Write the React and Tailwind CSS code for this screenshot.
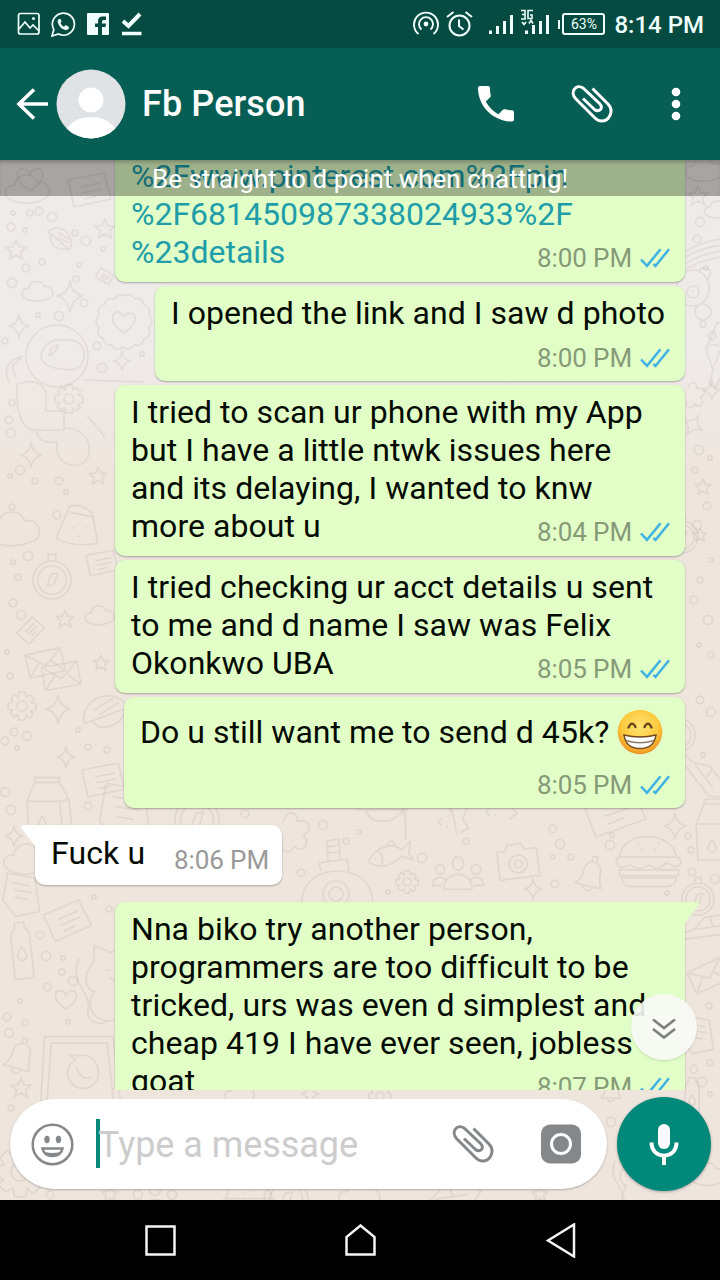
import React from "react";

const STAR = "M0-10 3-3 10-3 4.500 2 6.500 9 0 5-6.500 9-4.500 2-10-3-3-3Z";
const SPARK = "M0-13Q1-2 11 0Q2 2 0 13Q-2 2-11 0Q-1-2 0-13Z";
const HEART = "M0 9C-16-1-11-11-4-9Q-1-8 0-4Q1-8 4-9C11-11 16-1 0 9Z";
const CLOUD = "M-11 7C-18 3-15-4-9-3C-8-12 4-12 6-5C14-7 17 3 11 6Q0 11-11 7Z";
const GEAR = "M-3-14H3L4-9 8-11 12-7 9-4 14-2V4L9 5 11 9 7 12 4 9 3 14H-3L-4 9-8 11-12 7-9 4-14 3V-3L-9-4-11-8-7-12-4-9Z M5 0A5 5 0 1 1-5 0A5 5 0 1 1 5 0";
const BELL = "M-10 9Q-5 4-5-4C-5-14 9-14 9-4Q9 4 12 9ZM-3 10Q1 16 5 10M0-12V-16H4V-12";
const CARD = "M-20-10 16-17 23 9-14 17ZM-7-3 13-7M-6 3 14-1M-4 9 8 6";
const MAIL = "M-20-12H20V14H-20ZM-20-12 0 4 20-12M-20 14-6-1M20 14 6-1";
const BURGER = "M-30-8C-28-36 24-36 28-8ZM-32-8H30Q36-2 28 2L18-2 9 4 0 0-10 4-20 0-29 3Q-36-3-32-8M-30 5H30V11H-30ZM-28 13H28Q27 22 18 22H-18Q-27 22-28 13M-12-22h2M-2-25h2M9-22h2M-8-15h2M5-16h2";
const CAMERA = "M-20-12H-12L-9-18H5L8-12H20V16H-20ZM9 2A9 9 0 1 1-9 2A9 9 0 1 1 9 2M4 2A4 4 0 1 1-4 2A4 4 0 1 1 4 2";
const PEOPLE = "M6-12A6 7 0 1 1-6-12A6 7 0 1 1 6-12M-14-6A5 5 0 1 1-24-6A5 5 0 1 1-14-6M24-6A5 5 0 1 1 14-6A5 5 0 1 1 24-6M-15 15C-15-6 15-6 15 15ZM-17 11H-27C-26 2-18 0-13 5M17 11H27C26 2 18 0 13 5";
const FISH = "M-22 5C-10-10 6-12 15-2L25-10 22 2 25 10 14 4C2 14-12 14-22 5ZM-9-3Q-4 3-8 9M-14 3h1M-2-7 6-14 9-6";
const BOTTLE = "M-10-14Q-10-24-5-26V-32H5V-26Q10-24 10-14V27H-10ZM0-7Q9 6 0 8Q-9 6 0-7Z";
const CARTON = "M-22-6-14-26H12L22-8 26 30H-20ZM-22-6H12L22-8M12-6 16 30M-14-26V-31H12V-26M-6 10Q2 21-6 22Q-14 21-6 10Z";
const DOC = "M-18-26 16-20 22 22-8 28-24 8ZM-12-14 10-10M-10-5 12-2M-9 4 7 7";
const COMPASS = "M20 0A20 20 0 1 1-20 0A20 20 0 1 1 20 0M15 0A15 15 0 1 1-15 0A15 15 0 1 1 15 0M-5 6-1-6 6-7 2 5ZM-4-20V-27H4V-20";
const FLOWER = "M0-26Q7-30 11-23Q19-25 20-17Q28-14 25-7Q31 0 25 6Q28 14 20 17Q18 25 10 23Q5 30-1 25Q-9 30-12 23Q-20 24-21 16Q-29 13-25 6Q-31 0-25-7Q-28-15-20-17Q-18-25-10-23Q-5-29 0-26ZM0 11C-18 0-11-14-4-9L0-6C10-15 19-1 0 11Z";
const ASTRO = "M31-28A31 31 0 1 1-31-28A31 31 0 1 1 31-28M-16-28Q-13-46 8-44Q28-45 27-27Q25-11 6-15Q-15-16-16-28M-8-28Q-7-38 1-39Q-1-31-8-28M-34-28C-50-24-54-14-48-2M-40 0C-42 34-32 48-20 46H7V27H-11V8Q-16-4-31-2ZM-20 47C-18 62-3 58 0 58C-4 85 31 89 32 68C34 48 16 44 7 44M27-4 88-2M30 32Q42 44 48 54M-36-26-45-18-41-6";
const DRESS = "M-22 18-15-18Q-4-24 10-16L22 14Q-3 24-22 18ZM-14-12H13M-7 3h2M5 0h2M0 11h2";
const WHALE = "M-22 0C-18-26 20-26 25 0ZM-9-9 14-14M-5-3 18-8M-14 0Q-10 15 12 10L24 0";
const PHONE = "M-34-34H28L36 34H-38ZM-28-28H23L29 29H-32ZM15 0A14 14 0 1 1-6-13L-12-18Q-5-16-1-17A15 16 0 0 1 15 0M-5-6Q0 7 8 3";
const CAT = "M26-30 20-41 9-33-8-40-9-22C-20-12-19 5-8 8C-20 26-6 42 14 38H34M-24-27C-36 0-9 9-15 29C-15 42 0 44 6 38M4-15h3M17-14h3M8-7 13-3 17-7";
const CAR = "M-34 12 28 4 38-10 24-20-4-16-18 0-32 4ZM-14-1 22-6M2-16 7-4";
const SHIP = "M-34 26Q-30-4 0-6Q36-6 38 26M-14-6-16-14 12-18 14-5M-7-16-8-36 4-38 5-18M-8-30 4-32M-8-24 4-25M14 17A13 13 0 1 1-12 17A13 13 0 1 1 14 17M8 17A7 7 0 1 1-6 17A7 7 0 1 1 8 17";
const LEAF = "M-6-12C-4-24 8-22 7-12C18-16 22-4 12 0C20 8 10 18 4 10C0 20-10 14-8 6";
const STRIPES = "M-20 6Q0-6 26-8M-20 12Q0 0 26-2M-20 18Q0 6 26 4M-20 24Q0 12 26 10";
const BEAR = "M16 0A16 18 0 1 1-16 0A16 18 0 1 1 16 0M6 4A6 6 0 1 1-6 4A6 6 0 1 1 6 4M-2 3h3M14-8Q22-18 12-20Q6-20 6-16M18 24A8 8 0 1 1 2 24A8 8 0 1 1 18 24";

const DOODLES = [
  [HEART, 30, 180, 1.2], [CLOUD, 28, 190, 1.5], [CARD, 88, 190, 1], [STAR, 16, 250, 1], [WHALE, 58, 240, 0.6, 40],
  [STAR, 105, 229, 1], [CARD, 104, 276, 0.4, 40], [CLOUD, 38, 292, 1.05], [SPARK, 70, 296, 1.2], [FLOWER, 124, 322, 1],
  [SPARK, 19, 326, 0.9], [ASTRO, 57, 384, 1], [GEAR, 69, 399, 1], [SPARK, 122, 361, 0.75], [SPARK, 31, 455, 0.95],
  [STAR, 98, 476, 0.9], [CLOUD, 14, 530, 1.8], [DRESS, 80, 526, 0.95, 12], [COMPASS, 52, 580, 0.95], [CARD, 101, 563, 0.75],
  [CLOUD, 100, 616, 1], [CARD, 30, 631, 0.6, -35], [STAR, 65, 619, 0.9], [MAIL, 45, 662, 0.9, -12], [MAIL, 61, 675, 0.9, -10],
  [STAR, 101, 663, 0.8], [GEAR, 22, 706, 1], [SPARK, 58, 709, 1.1], [WHALE, 105, 716, 1, -20], [SPARK, 66, 757, 0.8],
  [CARD, 102, 780, 1], [CARTON, 48, 807, 0.95], [DOC, 126, 812, 1.1], [COMPASS, 197, 820, 1.1], [SPARK, 14, 836, 0.8],
  [CLOUD, 28, 860, 1.6], [DOC, 22, 894, 0.8], [CARD, 66, 921, 1.05, -12], [BOTTLE, 22, 953, 0.95, -6], [HEART, 66, 1000, 1],
  [CAT, 102, 984, 0.95], [BELL, 18, 1057, 1.25, 15], [STAR, 21, 1088, 1], [PHONE, 82, 1074, 1.1],
  [LEAF, 290, 835, 1.1], [SHIP, 335, 877, 1], [FISH, 388, 854, 0.95, -8], [GEAR, 407, 882, 0.8],
  [WHALE, 380, 810, 1], [CAT, 436, 812, 0.8, 90], [CAT, 482, 803, 0.8, 80], [PEOPLE, 458, 875, 0.95], [CAMERA, 518, 862, 1, -7],
  [CARD, 612, 811, 1.4, -8], [BELL, 589, 875, 1.2, 12], [BURGER, 649, 865, 0.98], [SPARK, 675, 826, 1], [SPARK, 533, 889, 0.8],
  [CARTON, 718, 830, 1], [COMPASS, 698, 899, 0.8], [STAR, 698, 196, 1], [CLOUD, 705, 170, 1.3],
  [CLOUD, 718, 210, 0.9], [STRIPES, 704, 246, 1], [BEAR, 693, 288, 1], [CAR, 722, 354, 1, -60], [SPARK, 712, 390, 0.8],
  [LEAF, 692, 397, 0.7], [SPARK, 693, 425, 0.9, 30], [STAR, 703, 487, 0.8],
  [COMPASS, 682, 537, 0.8], [STAR, 700, 535, 0.7], [COMPASS, 678, 735, 0.85], [CAR, 700, 775, 0.8, 60],
  [CAR, 708, 930, 0.8], [MAIL, 708, 975, 0.9, -25], [DOC, 698, 1034, 0.7], [CLOUD, 709, 1175, 1.2], [CAT, 632, 1180, 0.7],
  [GEAR, 20, 1172, 1.8], [BURGER, 250, 1205, 0.8], [COMPASS, 286, 1200, 1.1], [CAR, 447, 1200, 0.9], [CLOUD, 360, 1196, 1.4],
  [PEOPLE, 155, 1200, 0.9], [STAR, 110, 1194, 0.8], [CLOUD, 240, 1094, 1], [SPARK, 310, 1094, 0.8], [GEAR, 380, 1096, 0.8],
  [BOTTLE, 692, 1100, 0.7], [BELL, 610, 1090, 0.9], [STAR, 540, 1194, 0.8],
];

const DOTS = [
  [13, 213], [30, 213], [39, 211], [52, 217], [25, 230], [75, 233], [11, 227], [86, 241], [103, 249], [42, 262], [26, 268], [12, 283],
  [79, 265], [76, 279], [84, 303], [59, 316], [38, 315], [5, 341], [97, 346], [102, 368], [142, 354], [12, 403], [9, 420], [11, 433],
  [10, 476], [35, 481], [59, 481], [20, 470], [66, 492], [12, 507], [57, 515], [28, 556], [13, 562], [18, 577], [13, 603], [21, 615],
  [7, 652], [10, 676], [14, 732], [27, 736], [78, 730], [88, 747], [5, 741], [5, 792], [17, 748], [107, 750], [88, 806], [11, 810],
  [94, 897], [109, 909], [40, 935], [46, 956], [63, 958], [62, 972], [47, 987], [73, 981], [20, 1001], [25, 1023], [7, 1017], [9, 1033],
  [68, 1022], [11, 1108], [245, 814], [323, 825], [359, 832], [346, 841], [301, 873], [422, 858], [388, 892], [466, 841], [553, 829],
  [560, 844], [553, 857], [571, 857], [555, 884], [610, 845], [612, 835], [688, 836], [692, 872], [715, 879], [667, 893], [691, 850],
  [697, 239], [700, 222], [706, 268], [703, 324], [712, 336], [699, 450], [710, 458], [695, 470], [707, 506], [697, 525],
  [711, 560], [700, 580], [694, 600], [708, 620], [699, 645], [711, 655], [700, 700], [711, 712], [703, 755], [710, 1063], [694, 1069],
  [702, 1082], [710, 1094], [709, 1006], [50, 1195], [611, 1122],
];

function Wallpaper() {
  return (
    <svg className="absolute inset-0 h-full w-full" viewBox="0 160 720 1040" fill="none" stroke="#8d7b6f" strokeOpacity="0.125" strokeWidth="1.7" strokeLinejoin="round" aria-hidden="true">
      {DOODLES.map(([d, x, y, s, r = 0], i) => (
        <path key={i} d={d} transform={`translate(${x} ${y}) rotate(${r}) scale(${s})`} vectorEffect="non-scaling-stroke" />
      ))}
      {DOTS.map(([x, y], i) => <circle key={i} cx={x} cy={y} r={2.2 + (i % 4) * 0.8} />)}
    </svg>
  );
}

function Clip({ className }) {
  return (
    <svg className={className} viewBox="0 0 42 38" fill="none" stroke="currentColor" strokeWidth="3" strokeLinecap="butt">
      <path d="M21.500 3.500 36.500 18.500C44 26 38 36 30.500 36Q27 36 24 33L4.500 13.500C-1.500 7 5-1.500 12 3L28.500 18.500C33.500 23.500 27.500 28 23.500 24.500L12 13.500" />
    </svg>
  );
}

function Ticks() {
  return (
    <svg className="h-5 w-[30px] shrink-0" viewBox="0 0 30 20" fill="none" stroke="#3fb2e3" strokeWidth="2.500">
      <path d="M1 11.500 7 17.800 20.500 1.200M13.500 16 15.500 18 29 1.200" />
    </svg>
  );
}

function Stamp({ time, read = true, className = "" }) {
  return (
    <span className={`flex shrink-0 items-center whitespace-nowrap text-[26px] leading-[30px] tracking-[-0.1px] ${read ? "gap-2 text-[#869a78]" : "text-[#999]"} ${className}`}>
      <span>{time}</span>
      {read && <Ticks />}
    </span>
  );
}

function Bubble({ lines, time, className, tail = false, link = false }) {
  const last = lines[lines.length - 1];
  return (
    <div className={`relative ml-auto mr-[35px] rounded-[10px] bg-[#e1ffc7] pt-2 pl-4 pr-[15px] shadow-[0_1px_2px_rgba(0,0,0,0.3)] ${tail ? "rounded-tr-none" : ""} ${link ? "text-[#1f9da9]" : "tracking-[0.05px]"} ${className}`}>
      {tail && (
        <svg className="absolute -right-[15px] top-0 h-[22px] w-4" viewBox="0 0 16 22"><path d="M0 0H13Q17 1 14 4L1 21H0Z" fill="#e1ffc7" /></svg>
      )}
      {lines.slice(0, -1).map((line) => <p key={line}>{line}</p>)}
      <div className="flex h-[38px] justify-between">
        <p>{last}</p>
        <Stamp time={time} className="mt-3" />
      </div>
    </div>
  );
}

function StatusBar() {
  return (
    <div className="flex h-12 items-center bg-[#064b41] pl-[17px] pr-4 text-[#effffb]">
      <svg className="h-6 w-6" viewBox="0 0 24 24" fill="none" stroke="currentColor" strokeWidth="1.700">
        <rect x="1.500" y="1.500" width="20.500" height="20.500" rx="2" /><path d="m2 17 6-7 5 6 3-3 6 6" /><circle cx="16.500" cy="6.500" r="1.500" fill="currentColor" stroke="none" />
      </svg>
      <svg className="ml-[10px] h-[25px] w-[25px]" viewBox="0 0 25 25" fill="none" stroke="currentColor" strokeWidth="1.700">
        <path d="M1 24 2.800 17.500A11 11 0 1 1 7.500 22Z" /><path d="M8 7Q6 8 7 11C9 16 12 18 16 18Q18 17 18 15L14.500 13 13 15Q10 13 9.500 11L10.500 9.500 9.500 7Z" fill="currentColor" stroke="none" />
      </svg>
      <svg className="ml-[11px] h-[22px] w-[22px]" viewBox="0 0 22 22">
        <rect width="22" height="22" rx="1" fill="currentColor" /><path d="M11 22V14H8V10.500H11V8Q11 3.500 15.500 3.500H19V7H16.500Q15 7 15 8.500V10.500H19L18.500 14H15V22Z" fill="#064b41" />
      </svg>
      <svg className="ml-3 h-6 w-[21px]" viewBox="0 0 21 24" fill="none" stroke="currentColor"><path d="M2 9 7.500 14 19 2" strokeWidth="4" /><path d="M1 21.500H20.500" strokeWidth="3.500" /></svg>
      <svg className="ml-auto h-[26px] w-[26px]" viewBox="0 0 26 26" fill="none" stroke="currentColor" strokeWidth="1.900">
        <path d="M5.500 23A12 12 0 1 1 20.500 23M8.500 18.500A7 7 0 1 1 17.500 18.500" /><circle cx="13" cy="13" r="2.400" fill="currentColor" stroke="none" />
      </svg>
      <svg className="ml-[7px] h-[26px] w-[27px]" viewBox="0 0 27 26" fill="none" stroke="currentColor" strokeWidth="2">
        <circle cx="13.500" cy="14.500" r="10" /><path d="M13 8.500V15L17.500 18.500M1 6 7.500 1M26 6 19.500 1" />
      </svg>
      <svg className="ml-[15px] h-[26px] w-[62px] overflow-visible" viewBox="0 0 62 26" stroke="currentColor" strokeWidth="3" fill="none">
        <path d="M2.500 23V19.500M9.500 23V15M16.500 23V10M23.500 23V4M38.500 23V19.500M45.500 23V14M52.500 23V10M59.500 23V4" />
        <path d="M33-.5H37V8H33M34 3.500H37M45-.5H40V7.500H44V4H42M34 11 36 13.500 38 11M41 12.500 43 9.500 45 12.500" strokeWidth="1.600" />
      </svg>
      <span className="ml-2 h-[9px] w-[2px] bg-current" />
      <span className="ml-[2px] flex h-[22px] w-[43px] items-center justify-center rounded-[3px] border-2 border-current text-[14px] leading-none">63%</span>
      <span className="ml-[9px] mt-0.5 text-[24px] font-medium leading-[30px]">8:14 PM</span>
    </div>
  );
}

function ChatHeader() {
  return (
    <div className="flex h-28 items-center bg-[#075e54] pl-4 pr-[39px] text-white">
      <svg className="h-8 w-8" viewBox="0 0 32 32" fill="none" stroke="currentColor" strokeWidth="3.600"><path d="M18 1.500 3 16 18 30.500M3 16H32" /></svg>
      <svg className="ml-2 h-[70px] w-[70px]" viewBox="0 0 70 70">
        <clipPath id="face"><circle cx="35" cy="35" r="34.500" /></clipPath>
        <g clipPath="url(#face)"><path fill="#dfe3e6" d="M0 0H70V70H0Z" /><circle cx="35" cy="31" r="12.500" fill="#fff" /><ellipse cx="35" cy="65" rx="25" ry="17" fill="#fff" /></g>
      </svg>
      <h1 className="ml-4 text-[36px] font-medium leading-[44px] tracking-[0.1px]">Fb Person</h1>
      <svg className="ml-auto h-9 w-9" viewBox="0 0 37 37" fill="currentColor"><path d="M2 0H10.500Q12.300 0 12.300 2Q12.300 6 13 9Q13.500 10.500 12.500 11.500L8 16Q13 25 21 29L25.500 24.500Q26.500 23.500 28 24Q31.500 25 35 25Q37 25 37 27V34.500Q37 36.500 35 36.500C16 36.500 0 21 0 2Q0 0 2 0Z" /></svg>
      <Clip className="ml-[57px] h-[38px] w-[42px]" />
      <svg className="ml-[58px] h-[34px] w-[10px]" viewBox="0 0 10 34" fill="currentColor"><circle cx="5" cy="5" r="4.300" /><circle cx="5" cy="17" r="4.300" /><circle cx="5" cy="29" r="4.300" /></svg>
    </div>
  );
}

function Grin() {
  return (
    <svg className="ml-2 mt-[4px] h-[46px] w-[46px] shrink-0" viewBox="0 0 46 46">
      <defs><radialGradient id="skin" cx=".5" cy=".38" r=".64"><stop offset="0" stopColor="#ffe36f" /><stop offset=".65" stopColor="#ffc83d" /><stop offset="1" stopColor="#ed8b20" /></radialGradient></defs>
      <circle cx="23" cy="23" r="22.300" fill="url(#skin)" />
      <path d="M11.500 18.500Q15 11 18.500 18M27.500 18Q31 11 34.500 18.500" fill="none" stroke="#664719" strokeWidth="2.400" strokeLinecap="round" />
      <path d="M7 26Q23 30 39 26Q37 39.500 23 39.500Q9 39.500 7 26Z" fill="#fff" stroke="#70471a" strokeWidth="1.500" />
      <path d="M9 31.500Q23 36 37 31.500" fill="none" stroke="#8e7b67" strokeWidth="1.500" />
    </svg>
  );
}

function Composer() {
  return (
    <div className="relative flex h-[110px] items-start pl-[10px] pr-[9px] pt-[7px]">
      <div className="mt-[2px] flex h-[90px] w-[597px] items-center rounded-full bg-white pl-[21px] pr-[26px] shadow-[0_1px_2px_rgba(0,0,0,0.25)]">
        <svg className="h-[43px] w-[43px]" viewBox="0 0 43 43" fill="none" stroke="#84888b" strokeWidth="2.500">
          <circle cx="21.500" cy="21.500" r="19.800" /><ellipse cx="16" cy="16.500" rx="2.700" ry="3.700" fill="#84888b" stroke="none" /><ellipse cx="27.500" cy="16.500" rx="2.700" ry="3.700" fill="#84888b" stroke="none" /><path d="M11.500 25.500H31.500Q30 33 21.500 33Q13 33 11.500 25.500Z" /><path d="M14 29Q21 31 29 29L27 32H16Z" fill="#84888b" stroke="none" />
        </svg>
        <span className="ml-[22px] -mt-[2px] h-[49px] w-1 bg-[#07887b]" />
        <span className="-ml-[2px] mt-[2px] text-[36px] leading-[44px] tracking-[-0.05px] text-[#ccc]">Type a message</span>
        <Clip className="ml-auto h-[38px] w-[42px] text-[#84888b]" />
        <svg className="ml-[47px] h-10 w-10" viewBox="0 0 40 40"><rect y=".500" width="40" height="39" rx="9" fill="#84888b" /><circle cx="20" cy="20" r="9.500" fill="none" stroke="#fff" strokeWidth="3" /></svg>
      </div>
      <div className="ml-auto flex h-[94px] w-[94px] items-center justify-center rounded-full bg-[#00887a] shadow-[0_1px_3px_rgba(0,0,0,0.3)]">
        <svg className="h-[41px] w-[30px]" viewBox="0 0 30 41"><rect x="9" width="12" height="25" rx="6" fill="#fff" /><path d="M2.500 18.500C2.500 36 27.500 36 27.500 18.500M15 31V41" fill="none" stroke="#fff" strokeWidth="4" /></svg>
      </div>
    </div>
  );
}

export default function App() {
  return (
    <div className="flex h-[1280px] w-[720px] flex-col overflow-hidden bg-black font-['Roboto',sans-serif]">
      <header><StatusBar /><ChatHeader /></header>
      <main className="relative flex h-[1040px] flex-col bg-[linear-gradient(#efebea_0px,#efebe9_190px,#eee5dd_320px,#eee5dd_1040px)]">
        <Wallpaper />
        <section className="relative h-[930px] overflow-hidden text-[32px] leading-[38px] text-[#050b02] whitespace-nowrap">
          <div className="-mt-[11px] flex flex-col gap-1">
            <Bubble link className="h-[133px] w-[570px]" lines={["%2Fwww.pinterest.com%2Fpin", "%2F681450987338024933%2F", "%23details"]} time="8:00 PM" />
            <div className="relative ml-auto mr-[35px] flex h-[95px] w-[530px] flex-col rounded-[10px] bg-[#e1ffc7] pt-2 pl-4 pr-[15px] shadow-[0_1px_2px_rgba(0,0,0,0.3)]">
              <p className="tracking-[0.04px]">I opened the link and I saw d photo</p>
              <Stamp time="8:00 PM" className="ml-auto mt-[11px]" />
            </div>
            <Bubble className="h-[171px] w-[570px]" lines={["I tried to scan ur phone with my App", "but I have a little ntwk issues here", "and its delaying, I wanted to knw", "more about u"]} time="8:04 PM" />
            <Bubble className="h-[133px] w-[570px]" lines={["I tried checking ur acct details u sent", "to me and d name I saw was Felix", "Okonkwo UBA"]} time="8:05 PM" />
            <div className="relative ml-auto mr-[35px] flex h-[111px] w-[561px] flex-col rounded-[10px] bg-[#e1ffc7] pt-2 pl-4 pr-[15px] shadow-[0_1px_2px_rgba(0,0,0,0.3)]">
              <div className="flex h-[54px]"><p className="mt-2 tracking-[0.03px]">Do u still want me to send d 45k?</p><Grin /></div>
              <Stamp time="8:05 PM" className="ml-auto mt-[11px]" />
            </div>
          </div>
          <div className="relative ml-[35px] mt-[17px] flex h-[60px] w-[247px] rounded-[10px] rounded-tl-none bg-white pl-4 pt-[9px] pr-[13px] shadow-[0_1px_2px_rgba(0,0,0,0.3)]">
            <svg className="absolute -left-[15px] top-0 h-[22px] w-4" viewBox="0 0 16 22"><path d="M16 0H3Q-1 1 2 4L15 21H16Z" fill="#fff" /></svg>
            <p className="tracking-[0.1px]">Fuck u</p>
            <Stamp time="8:06 PM" read={false} className="ml-auto mt-[11px] h-[30px]" />
          </div>
          <Bubble tail className="mt-[17px] h-[210px] w-[570px]" lines={["Nna biko try another person,", "programmers are too difficult to be", "tricked, urs was even d simplest and", "cheap 419 I have ever seen, jobless", "goat"]} time="8:07 PM" />
          <div className="absolute inset-x-0 top-0 flex h-9 items-center bg-black/30 pl-[152px] text-[26px] leading-[30px] text-white shadow-[inset_0_4px_4px_-2px_rgba(0,0,0,0.25)]">
            <span className="mt-0.5">Be straight to d point when chatting!</span>
          </div>
          <button className="absolute left-[631px] top-[834px] flex h-[66px] w-[66px] items-center justify-center rounded-full bg-[#f8faf6]/90 pt-[3px] shadow-[0_1px_2px_rgba(0,0,0,0.15)]">
            <svg className="h-[21px] w-6" viewBox="0 0 24 21" fill="none" stroke="#7f817e" strokeWidth="2.700"><path d="m1 1.500 11 8.500 11-8.500M1 11l11 8.500 11-8.500" /></svg>
          </button>
        </section>
        <Composer />
      </main>
      <nav className="flex h-20 items-center justify-center bg-black">
        <div className="flex w-[431px] items-center justify-between">
          <svg className="h-[31px] w-[31px]" viewBox="0 0 31 31"><rect x="1.500" y="1.500" width="28" height="28" fill="none" stroke="#f4f4f4" strokeWidth="2.500" /></svg>
          <svg className="h-8 w-[31px]" viewBox="0 0 31 32"><path d="M1.500 30.500V13L15.500 1.500 29.500 13V30.500Z" fill="none" stroke="#f4f4f4" strokeWidth="2.500" /></svg>
          <svg className="h-[35px] w-[30px]" viewBox="0 0 30 35"><path d="M2 17.500 28 1.500V33.500Z" fill="none" stroke="#f4f4f4" strokeWidth="2.500" /></svg>
        </div>
      </nav>
    </div>
  );
}
